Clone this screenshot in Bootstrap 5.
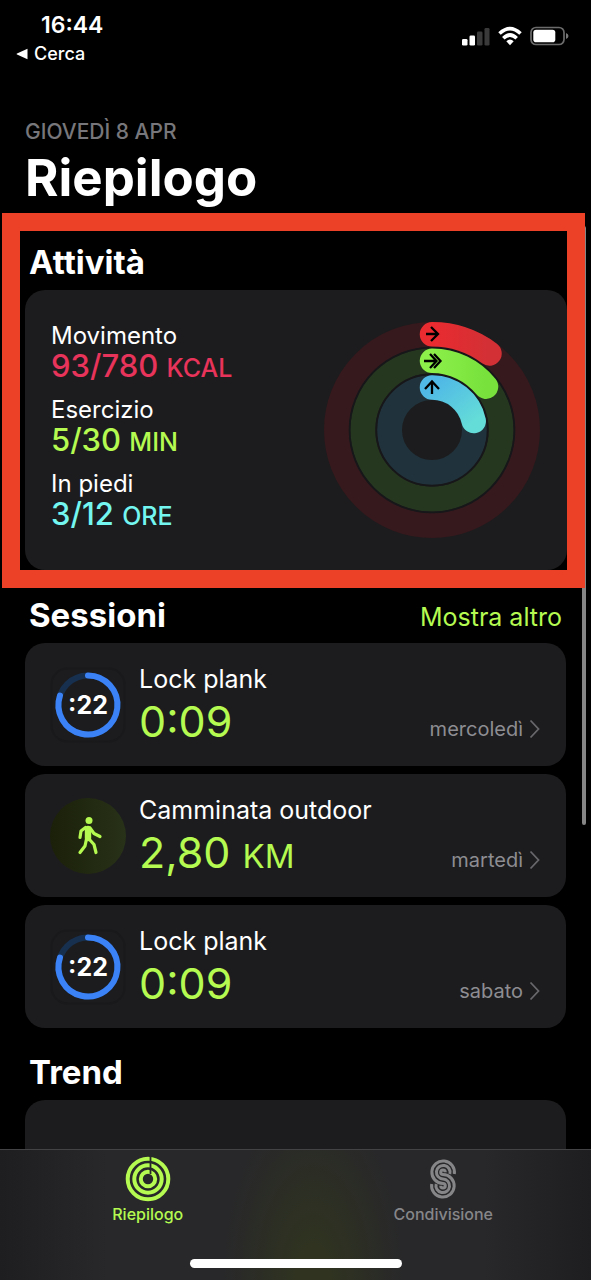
<!DOCTYPE html>
<html lang="it">
<head>
<meta charset="utf-8">
<meta name="viewport" content="width=device-width, initial-scale=1">
<title>Riepilogo</title>
<link rel="stylesheet" href="https://cdn.jsdelivr.net/npm/bootstrap@5.3.0/dist/css/bootstrap.min.css">
<style>
  body { background: #000; color: #fff; font-family: Inter, "Liberation Sans", sans-serif; }
  a { text-decoration: none; color: inherit; }
  .screen { height: 100vh; z-index: 0; }
  .status { height: 120px; padding: 12px 22px 0 16px; }
  .clock { font-size: 23px; line-height: 26px; font-weight: 600; padding-left: 25px; }
  .back-link { font-size: 18px; line-height: 24px; font-weight: 500; margin-top: 4px; gap: 6px; }
  .status-icons { gap: 8px; padding-top: 14px; }
  .page-head { padding: 0 25px; height: 93px; }
  .date-line { font-size: 21px; line-height: 24px; font-weight: 500; color: #77777b; }
  .page-title { font-size: 51px; line-height: 68px; font-weight: 700; }
  .highlight { border: 18px solid #ec4027; margin: 0 6px 0 2px; padding-left: 5px; }
  .section-title { font-size: 33px; line-height: 40px; font-weight: 700; }
  .highlight .section-title { padding: 11px 4px 8px; }
  .panel { background: #1c1c1e; border-radius: 20px; color: #fff; }
  .activity { min-height: 280px; padding: 32px 27px 24px 26px; }
  .metric { margin-bottom: 14px; }
  .metric:last-child { margin-bottom: 0; }
  .metric-name { font-size: 24px; line-height: 28px; }
  .metric-value { font-size: 31px; line-height: 32px; font-weight: 500; }
  .metric-value span { font-size: 25px; line-height: 1; }
  .move { color: #e8335a; } .exercise, .lime { color: #b4fa50; } .stand { color: #74f6f0; }
  .content-block { padding: 0 25px; }
  .block-head { height: 55px; padding: 7px 4px 0; }
  .more { font-size: 25px; line-height: 40px; margin-top: 2px; }
  .session { min-height: 123px; margin-bottom: 8px; padding: 20px 26px 16px 25px; gap: 13px; }
  .session-name { font-size: 25px; line-height: 32px; }
  .session-value { font-size: 43px; line-height: 52px; }
  .session-value span { font-size: 33px; line-height: 1; }
  .session-day { font-size: 20px; line-height: 26px; color: #8d8d92; gap: 6px; padding-bottom: 8px; }
  .session-icon { margin-top: 4px; }
  .trend { min-height: 200px; }
  .tabs { height: 131px; border-top: 1px solid #434345; padding-top: 6px;
    background: radial-gradient(ellipse 90px 180px at 53% 100%, #2f3320 20%, transparent), linear-gradient(90deg, #1e1e20, #28282a 18%, #28282a 82%, #1e1e20); }
  .tab-label { font-size: 16px; line-height: 20px; font-weight: 500; margin-top: 2px; }
  .tab-off { color: #868689; }
  .home-bar { width: 212px; height: 9px; bottom: 12px; background: #fff; }
  .scroll-thumb { top: 226px; right: 5px; width: 4px; height: 599px; background: #858585; z-index: -1; }
</style>
</head>
<body>
<div class="screen d-flex flex-column overflow-hidden position-relative">
  <div class="scroll-thumb position-absolute rounded-pill"></div>
  <main class="flex-grow-1 overflow-hidden">
    <header class="status d-flex justify-content-between align-items-start">
      <div>
        <div class="clock">16:44</div>
        <a href="#" class="back-link d-flex align-items-center">
          <svg width="12" height="12" viewBox="0 0 12 12" aria-hidden="true"><path d="M11.5 .8v10.4L1 6.6Q0 6 1 5.4z" fill="#fff"/></svg>Cerca</a>
      </div>
      <div class="status-icons d-flex">
        <svg width="28" height="20" viewBox="0 0 28 20" aria-hidden="true"><rect x="0" y="13" width="5.5" height="6.5" rx="1.3" fill="#fff"/><rect x="7.5" y="9.500" width="5.500" height="10" rx="1.300" fill="#fff"/><rect x="15" y="5.500" width="5.500" height="14" rx="1.300" fill="#3a3a3a"/><rect x="22.500" y="2" width="5" height="17.500" rx="1.300" fill="#3a3a3a"/></svg>
        <svg width="24" height="20" viewBox="0 0 24 20" aria-hidden="true"><g fill="none" stroke="#fff" stroke-width="3.600"><path d="M1.500 7.500Q12-2.400 22.500 7.500"/><path d="M5.300 12.200Q12 5.800 18.700 12.200"/></g><path d="M8.300 15.200Q12 12 15.700 15.200L12 19.200z" fill="#fff"/></svg>
        <svg width="39" height="20" viewBox="0 0 39 20" aria-hidden="true"><rect x="1" y="1.500" width="33" height="17" rx="5" fill="none" stroke="#6b6b6b" stroke-width="1.700"/><rect x="3.300" y="3.800" width="22" height="12.400" rx="2.800" fill="#fff"/><path d="M36 7q2.500 1 2.500 3T36 13z" fill="#777"/></svg>
      </div>
    </header>
    <div class="page-head">
      <div class="date-line">GIOVEDÌ 8 APR</div>
      <h1 class="page-title mb-0">Riepilogo</h1>
    </div>
    <section class="highlight">
      <h2 class="section-title mb-0">Attività</h2>
      <div class="panel activity d-flex justify-content-between align-items-start">
        <div>
          <div class="metric"><div class="metric-name">Movimento</div><div class="metric-value move">93/780 <span>KCAL</span></div></div>
          <div class="metric"><div class="metric-name">Esercizio</div><div class="metric-value exercise">5/30 <span>MIN</span></div></div>
          <div class="metric"><div class="metric-name">In piedi</div><div class="metric-value stand">3/12 <span>ORE</span></div></div>
        </div>
        <svg width="216" height="216" viewBox="-108 -108 216 216" fill="none" role="img" aria-label="Anelli attività">
          <defs>
            <linearGradient id="gr"><stop stop-color="#ea2b30"/><stop offset="1" stop-color="#d23035"/></linearGradient>
            <linearGradient id="gg"><stop stop-color="#8cef4a"/><stop offset="1" stop-color="#78e13b"/></linearGradient>
            <linearGradient id="gb" x2="1" y2="1"><stop stop-color="#50b9e6"/><stop offset="1" stop-color="#64dcd8"/></linearGradient>
          </defs>
          <g stroke-width="25"><circle r="95.500" stroke="#35191d"/><circle r="69.200" stroke="#26371f"/><circle r="42.500" stroke="#20323b"/></g>
          <g stroke="#17171a" stroke-width="1.800"><circle r="82.400"/><circle r="55.700"/></g>
          <g stroke-width="24.500" stroke-linecap="round">
            <path d="M0-95.700A95.700 95.700 0 0 1 57.500-76.500" stroke="url(#gr)"/>
            <path d="M0-69.200A69.200 69.200 0 0 1 54-43.300" stroke="url(#gg)"/>
            <path d="M0-42.500A42.500 42.500 0 0 1 41.700-9" stroke="url(#gb)"/>
          </g>
          <g stroke="#000" stroke-width="2.300"><path d="M-6-96H5M-1-103L6-96L-1-89"/><path d="M-8-69H4M-2-76L4.500-69L-2-62M2-76L8.500-69L2-62"/><path d="M0-36V-48M-7-41L0-48.500L7-41"/></g>
        </svg>
      </div>
    </section>
    <section class="content-block">
      <div class="block-head d-flex justify-content-between align-items-start">
        <h2 class="section-title mb-0">Sessioni</h2><a href="#" class="more lime">Mostra altro</a>
      </div>
      <a href="#" class="panel session d-flex">
        <svg class="session-icon" width="76" height="76" viewBox="-38 -38 76 76" fill="none" aria-hidden="true"><rect x="-36.500" y="-36.500" width="73" height="73" rx="16" stroke="#19191b" stroke-width="2"/><circle r="29.500" stroke="#17304f" stroke-width="6"/><path d="M0-29.500A29.500 29.500 0 1 1-28-9.500" stroke="#3b82f6" stroke-width="6" stroke-linecap="round"/><text y="9" text-anchor="middle" font-size="25" font-weight="700" fill="#fff">:22</text></svg>
        <div><div class="session-name">Lock plank</div><div class="session-value lime">0:09</div></div>
        <div class="session-day ms-auto mt-auto d-flex align-items-center">mercoledì <svg width="11" height="20" viewBox="0 0 11 20" fill="none" aria-hidden="true"><path d="M1.500 1.500L9.500 10L1.500 18.500" stroke="#68686c" stroke-width="1.800"/></svg></div>
      </a>
      <a href="#" class="panel session d-flex">
        <svg class="session-icon" width="76" height="76" viewBox="0 0 76 76" fill="none" aria-hidden="true"><defs><linearGradient id="wk"><stop stop-color="#1b2009"/><stop offset="1" stop-color="#283218"/></linearGradient></defs><circle cx="38" cy="38" r="38" fill="url(#wk)"/><g stroke="#b4fa50" stroke-linecap="round" stroke-linejoin="round"><circle cx="39" cy="22.500" r="3.500" fill="#b4fa50" stroke="none"/><path d="M38 31V40" stroke-width="6.400"/><path d="M35.500 29.500L31 33L30 39.500M40 30L44 35.500L50 38.500M36.500 41L35 48L30 54.500M39 41L44 46.500L46 54.500" stroke-width="3.200"/></g></svg>
        <div><div class="session-name">Camminata outdoor</div><div class="session-value lime">2,80 <span>KM</span></div></div>
        <div class="session-day ms-auto mt-auto d-flex align-items-center">martedì <svg width="11" height="20" viewBox="0 0 11 20" fill="none" aria-hidden="true"><path d="M1.500 1.500L9.500 10L1.500 18.500" stroke="#68686c" stroke-width="1.800"/></svg></div>
      </a>
      <a href="#" class="panel session d-flex">
        <svg class="session-icon" width="76" height="76" viewBox="-38 -38 76 76" fill="none" aria-hidden="true"><rect x="-36.500" y="-36.500" width="73" height="73" rx="16" stroke="#19191b" stroke-width="2"/><circle r="29.500" stroke="#17304f" stroke-width="6"/><path d="M0-29.500A29.500 29.500 0 1 1-28-9.500" stroke="#3b82f6" stroke-width="6" stroke-linecap="round"/><text y="9" text-anchor="middle" font-size="25" font-weight="700" fill="#fff">:22</text></svg>
        <div><div class="session-name">Lock plank</div><div class="session-value lime">0:09</div></div>
        <div class="session-day ms-auto mt-auto d-flex align-items-center">sabato <svg width="11" height="20" viewBox="0 0 11 20" fill="none" aria-hidden="true"><path d="M1.500 1.500L9.500 10L1.500 18.500" stroke="#68686c" stroke-width="1.800"/></svg></div>
      </a>
    </section>
    <section class="content-block">
      <h2 class="section-title ps-1 mb-0 pt-3 pb-2">Trend</h2>
      <div class="panel trend"></div>
    </section>
  </main>
  <nav class="tabs d-flex flex-shrink-0 position-relative text-center">
    <a href="#" class="w-50 lime" aria-current="page">
      <svg class="d-block mx-auto" width="46" height="46" viewBox="-23 -23 46 46" fill="none" aria-hidden="true"><g stroke="#b4fa50" stroke-width="4"><circle r="20.300"/><circle r="13.700"/><circle r="7.200"/></g><path d="M2.500-23V-5" stroke="#28282a" stroke-width="1.800"/></svg>
      <div class="tab-label">Riepilogo</div></a>
    <a href="#" class="w-50 tab-off">
      <svg class="d-block mx-auto" width="46" height="46" viewBox="-23 -23 46 46" fill="none" aria-hidden="true"><g stroke="#868689" stroke-width="3"><path d="M11.300-5A11.300 11.300 0 1 0 0 4.500A2.300 2.300 0 1 1-2.300 6.800"/><path d="M6.800-5A6.800 6.800 0 1 0 0 0A6.800 6.800 0 1 1-6.800 5"/><path d="M2.300-6.800A2.300 2.300 0 1 0 0-4.500A11.300 11.300 0 1 1-11.300 5"/></g></svg>
      <div class="tab-label">Condivisione</div></a>
    <div class="home-bar position-absolute start-50 translate-middle-x rounded-pill"></div>
  </nav>
</div>
<script src="https://cdn.jsdelivr.net/npm/bootstrap@5.3.0/dist/js/bootstrap.bundle.min.js"></script>
</body>
</html>
